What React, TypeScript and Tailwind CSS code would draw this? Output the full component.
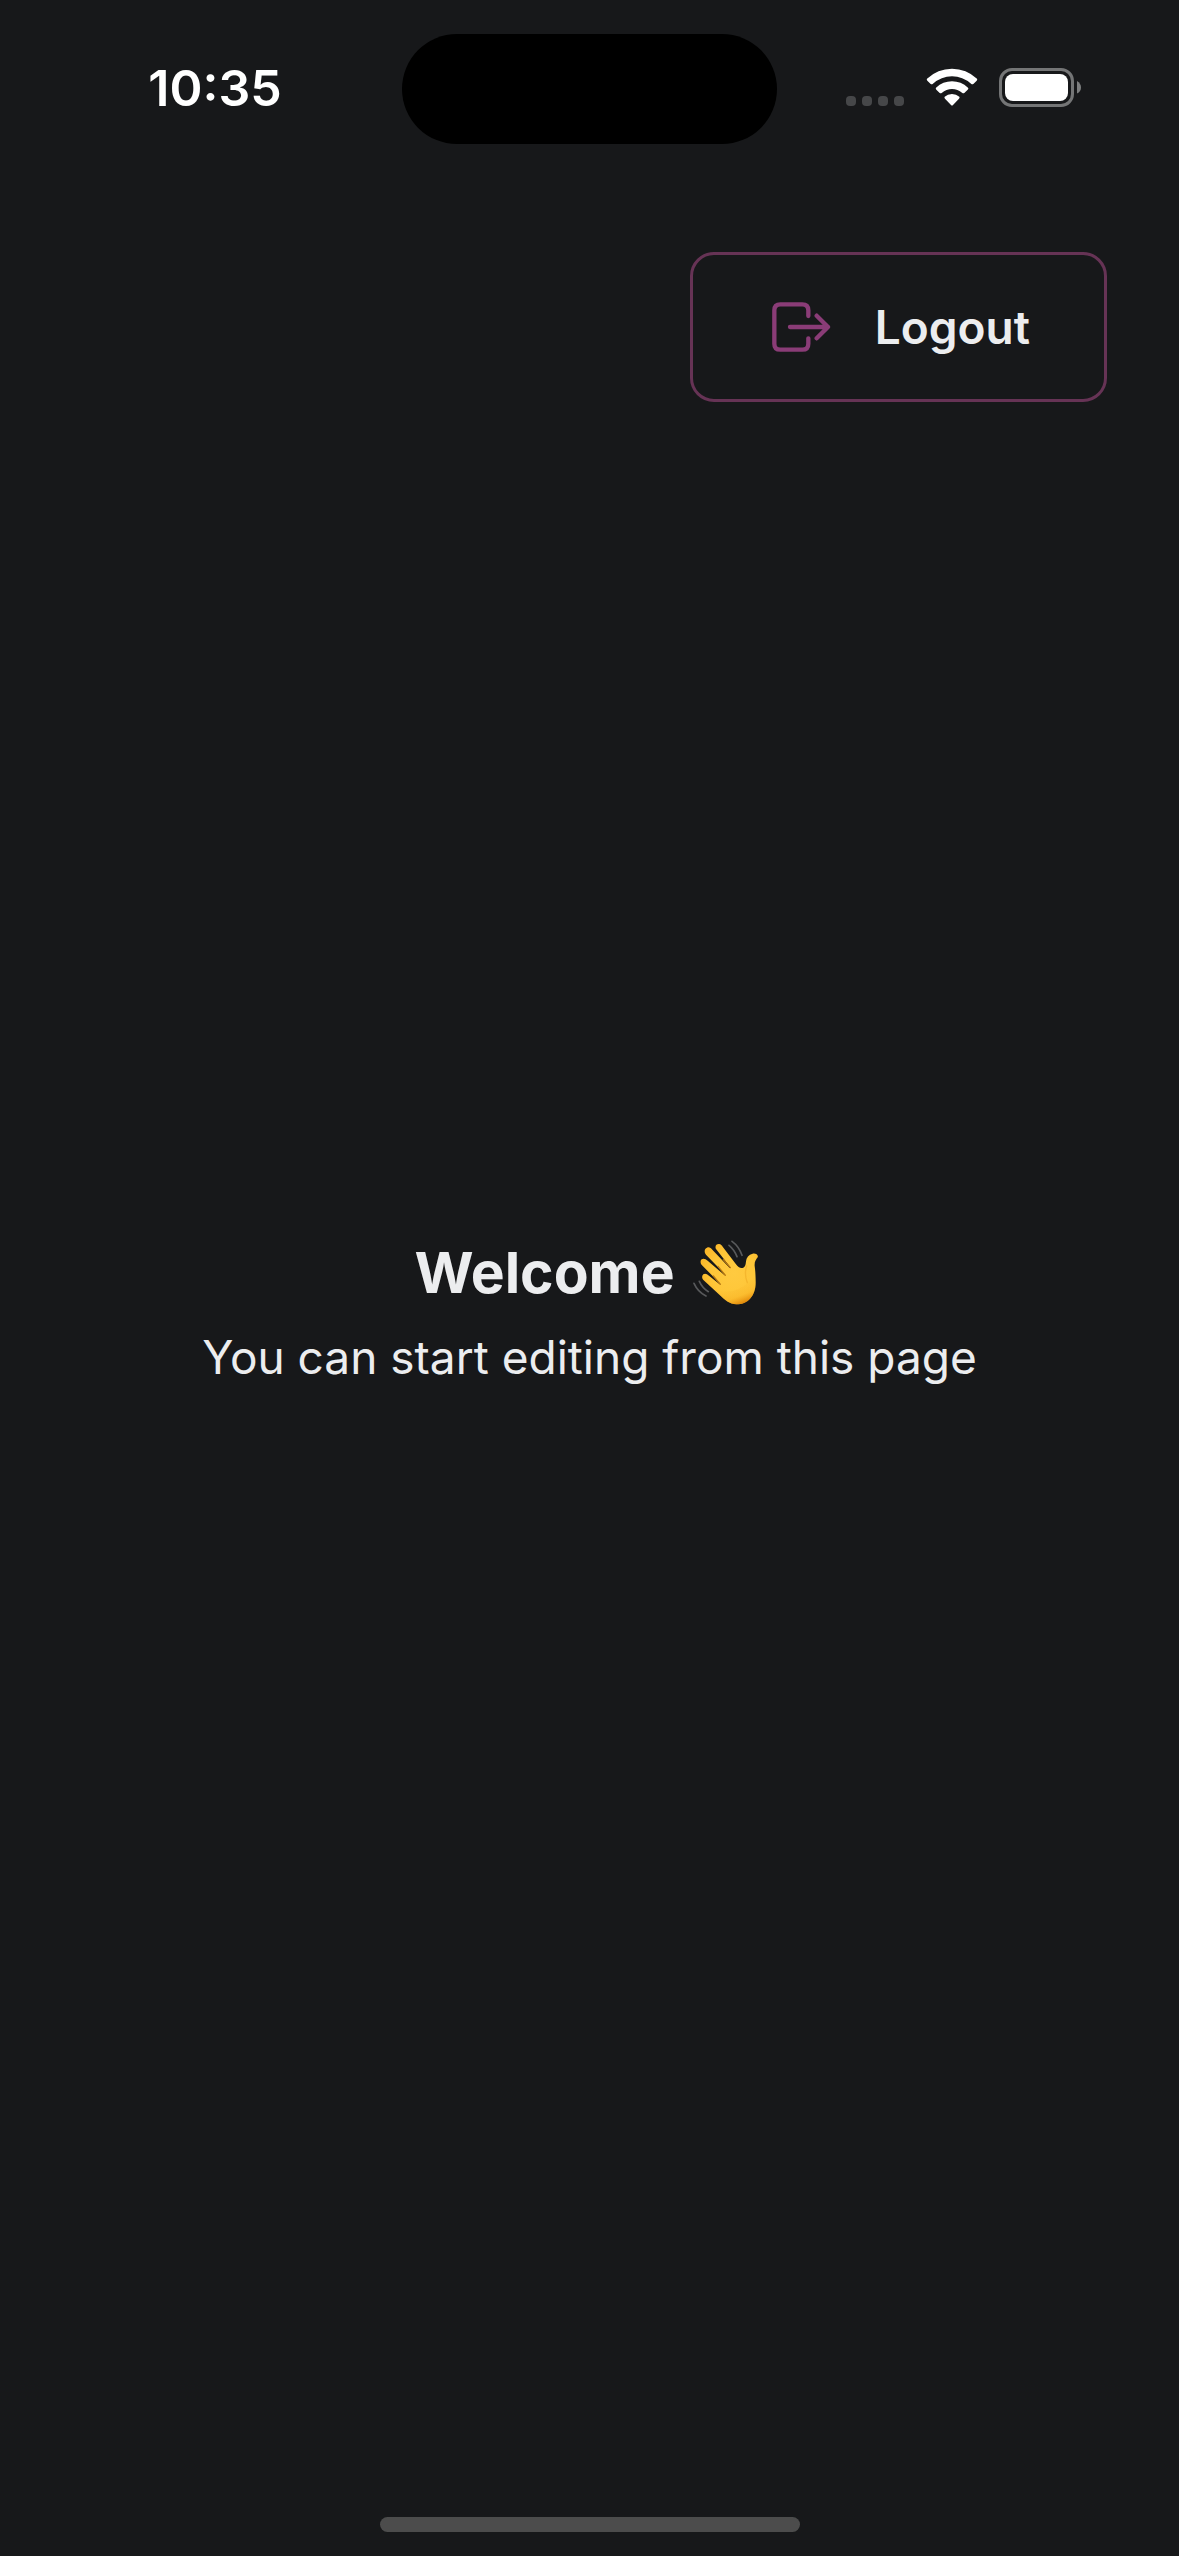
function SignalDots() {
  return (
    <div className="mt-[27px] flex gap-[6px]" aria-hidden="true">
      {[0, 1, 2, 3].map((dot) => (
        <span key={dot} className="size-[10px] rounded-[4px] bg-[#464749]" />
      ))}
    </div>
  );
}

function WifiIcon() {
  return (
    <svg className="h-[38px] w-[52px]" viewBox="0 0 156 114" fill="#fff" aria-label="Wi-Fi" role="img">
      <path d="M3 32Q1 35 4 38L14 48Q17 50 20 48Q46 25 78 25Q110 25 136 48Q139 50 142 48L152 38Q155 35 153 32Q121 2 78 2Q35 2 3 32Z" />
      <path d="M30 59Q28 62 31 65L41 75Q44 77 47 75Q61 63 78 63Q95 63 109 75Q112 77 115 75L125 65Q129 62 126 59Q105 40 78 40Q51 40 30 59Z" />
      <path d="M56 86Q54 89 57 92L75 111Q78 114 81 111L99 92Q102 89 100 86Q91 78 78 78Q65 78 56 86Z" />
    </svg>
  );
}

function BatteryIcon() {
  return (
    <svg className="h-[39px] w-[82px]" viewBox="0 0 82 39" aria-label="Battery" role="img">
      <rect x="1.5" y="1.5" width="72" height="36" rx="11.5" fill="none" stroke="#747576" strokeWidth="3" />
      <rect x="6" y="6" width="63" height="27" rx="8" fill="#fff" />
      <path d="M78 13Q82 15.500 82 19.500Q82 23.500 78 25.500Z" fill="#7d7e7f" />
    </svg>
  );
}

function StatusBar() {
  return (
    <div className="grid grid-cols-[1fr_375px_1fr] items-center pt-[34px] text-white">
      <time className="pb-[2px] pl-[28px] text-center text-[50px] leading-[60px] font-semibold">10:35</time>
      <div className="h-[110px] rounded-full bg-black" />
      <div className="flex items-center justify-center pr-[30px] pb-[4px]">
        <SignalDots />
        <div className="ml-[22px] flex gap-[21px]">
          <WifiIcon />
          <BatteryIcon />
        </div>
      </div>
    </div>
  );
}

function LogoutIcon() {
  return (
    <svg
      className="h-[50px] w-[59px]"
      viewBox="0 0 177 150"
      fill="none"
      stroke="#8a3c77"
      strokeWidth="13"
      strokeLinecap="round"
      strokeLinejoin="round"
      aria-hidden="true"
    >
      <path d="M109 42V25Q109 7 91 7H25Q7 7 7 25V125Q7 143 25 143H91Q109 143 109 125V109" />
      <path d="M54 75H168M134 41L168 75L134 109" />
    </svg>
  );
}

function WavingHand() {
  return (
    <svg className="h-[66px] w-[66px]" viewBox="37 30 198 198" role="img" aria-label="Waving hand">
      <defs>
        <radialGradient id="palm" gradientUnits="userSpaceOnUse" cx="160" cy="130" r="105">
          <stop offset="0" stopColor="#ffca40" />
          <stop offset="0.65" stopColor="#fec638" />
          <stop offset="1" stopColor="#fcb829" />
        </radialGradient>
        <linearGradient id="shade" gradientUnits="userSpaceOnUse" x1="155" y1="165" x2="178" y2="224">
          <stop offset="0" stopColor="#f5a91c" stopOpacity="0" />
          <stop offset="0.6" stopColor="#f5a91c" stopOpacity="0.3" />
          <stop offset="1" stopColor="#d87900" stopOpacity="0.85" />
        </linearGradient>
      </defs>
      <path
        d="M106 57C101 48 109 40 118 43C121 44 124 47 126 50L166 103C172 111 180 117 188 113C195 110 195 102 196 94C197 82 204 74 216 71C225 69 234 75 231 82C226 89 221 94 222 108C224 123 225 136 225 158C225 194 204 223 167 223C147 223 132 209 117 195L69 151C63 145 63 137 68 133C73 129 79 132 85 137L117 163L119 161L64 106C58 100 59 91 63 88C68 84 75 87 81 92L132 136L134 134L76 74C69 66 72 55 79 53C85 50 91 54 95 59L147 114L149 112Z"
        fill="url(#palm)"
      />
      <path d="M128 89L149 113M112 109L134 136M98 138L119 163" stroke="#b97912" strokeWidth="4" strokeLinecap="round" />
      <path d="M198 108C192 126 194 143 200 158" fill="none" stroke="#efab24" strokeWidth="4" strokeLinecap="round" opacity="0.6" />
      <path
        d="M225 140C226 151 225 158 225 162C223 199 202 223 167 223C147 223 132 209 117 195L90 170Q150 205 205 155Z"
        fill="url(#shade)"
      />
      <path
        d="M154 34Q175 49 184 76M145 46Q161 59 169 80M56 154Q65 174 83 185M40 160Q51 185 76 198"
        fill="none"
        stroke="#58595b"
        strokeWidth="5"
        strokeLinecap="round"
      />
    </svg>
  );
}

export default function App() {
  return (
    <div className="flex min-h-screen flex-col bg-[#17181a] font-['Inter',sans-serif] text-[#ecedef]">
      <StatusBar />
      <header className="flex justify-end px-[72px] pt-[108px]">
        <button
          type="button"
          className="flex h-[150px] items-center gap-[44px] rounded-[24px] border-[3px] border-[#663355] pr-[74px] pl-[79px] text-[46px] leading-[60px] font-semibold"
        >
          <LogoutIcon />
          Logout
        </button>
      </header>
      <main className="flex flex-1 flex-col items-center justify-center pb-[290px] text-center">
        <h1 className="flex items-center gap-[18px] pr-[6px] text-[57px] leading-[84px] font-bold">
          Welcome
          <WavingHand />
        </h1>
        <p className="text-[46px] leading-[84px]">You can start editing from this page</p>
      </main>
      <footer className="flex justify-center pb-[24px]">
        <div className="h-[15px] w-[420px] rounded-full bg-[#4c4c4c]" />
      </footer>
    </div>
  );
}
